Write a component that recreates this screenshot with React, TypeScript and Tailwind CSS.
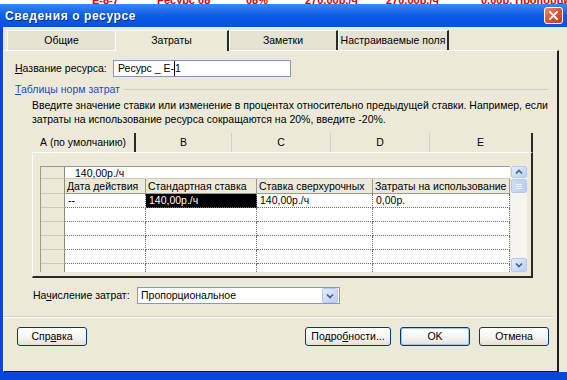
import clsx from 'clsx';

type Dir = 'up' | 'down';

const Chevron = ({ dir = 'down', color = '#4D6185' }: { dir?: Dir; color?: string }) => (
  <svg width="8" height="6" viewBox="0 0 8 6">
    <polyline
      points={dir === 'down' ? '1,1.5 4,4.5 7,1.5' : '1,4.5 4,1.5 7,4.5'}
      fill="none"
      stroke={color}
      strokeWidth="1.7"
    />
  </svg>
);

function ScrollButton({ dir, className }: { dir: Dir; className: string }) {
  return (
    <div
      className={clsx(
        'w-[16px] rounded-[2px] border border-[#B5C8F3] bg-linear-to-br from-[#E3ECFE] to-[#BACEF8] flex items-center justify-center',
        className
      )}
    >
      <Chevron dir={dir} />
    </div>
  );
}

function XpButton({
  children,
  className,
  isDefault,
}: {
  children: React.ReactNode;
  className: string;
  isDefault?: boolean;
}) {
  return (
    <div
      className={clsx(
        'h-[19px] rounded-[3px] border border-[#003C74] bg-linear-to-b from-white via-[#F7F6F2] to-[#E3E1D8] flex items-center justify-center',
        isDefault && 'shadow-[inset_0_0_0_1px_#A9C2EE]',
        className
      )}
    >
      {children}
    </div>
  );
}

const outerTabs = [
  { label: 'Общие', w: 'w-[108px]' },
  { label: 'Затраты', w: 'w-[114px]', active: true },
  { label: 'Заметки', w: 'w-[109px]' },
  { label: 'Настраиваемые поля', w: 'w-[111px]' },
];

const innerTabs = [
  { label: 'А (по умолчанию)', w: 'w-[104px]', active: true },
  { label: 'B', w: 'w-[96px]' },
  { label: 'C', w: 'w-[99px]' },
  { label: 'D', w: 'w-[99px]' },
  { label: 'E', w: 'w-[103px]' },
];

const colW = ['w-[81px]', 'w-[111px]', 'w-[116px]', 'w-[137px]'];
const headers = ['Дата действия', 'Стандартная ставка', 'Ставка сверхурочных', 'Затраты на использование'];
const dataRow = ['--', '140,00р./ч', '140,00р./ч', '0,00р.'];

// полоска таблицы, видимая над окном
const behind = [
  { text: '', w: 'w-[92px]' },
  { text: 'Е-8-7', w: 'w-[65px]' },
  { text: 'Ресурс 08', w: 'w-[89px]' },
  { text: '08%', w: 'w-[59px]' },
  { text: '270,00р./ч', w: 'w-[81px]' },
  { text: '270,00р./ч', w: 'w-[95px]' },
  { text: '0,00р. Пропорциональное', w: 'w-[120px]' },
];

function RowHead() {
  return <div className="w-[24px] shrink-0 bg-[#ECE9D8] border-r border-[#8E8C80] border-b border-b-[#CFCBBB]" />;
}

function Grid() {
  return (
    <div className="flex">
      <div className="w-[470px] h-[106px] overflow-hidden bg-white border-l border-t border-[#9C9A90]">
        <div className="flex h-[12px]">
          <RowHead />
          <div className="flex-1 pl-[10px] leading-[12px] border-b border-[#CFCBBB]">140,00р./ч</div>
        </div>
        <div className="flex h-[15px]">
          <RowHead />
          {headers.map((h, i) => (
            <div
              key={h}
              className={clsx(
                colW[i],
                'shrink-0 bg-[#ECE9D8] pl-[2px] leading-[14px] border-r border-[#9C9A90] border-b border-b-[#9C9A90] whitespace-nowrap overflow-hidden'
              )}
            >
              {h}
            </div>
          ))}
        </div>
        <div className="flex h-[14px]">
          <RowHead />
          {dataRow.map((d, i) => (
            <div
              key={i}
              className={clsx(
                colW[i],
                'shrink-0 pl-[3px] leading-[13px] border-r border-b border-dotted border-[#6E6E6E] whitespace-nowrap',
                i === 1 && 'bg-black text-white'
              )}
            >
              {d}
            </div>
          ))}
        </div>
        {[0, 1, 2, 3, 4].map((r) => (
          <div key={r} className="flex h-[14px]">
            <RowHead />
            {colW.map((w, i) => (
              <div key={i} className={clsx(w, 'shrink-0 border-r border-b border-dotted border-[#6E6E6E]')} />
            ))}
          </div>
        ))}
      </div>
      <div className="w-[16px] h-[106px] ml-[1px] flex flex-col bg-[#F5F4EF]">
        <ScrollButton dir="up" className="h-[12px]" />
        <div className="h-[14px] mt-[1px] rounded-[2px] border border-[#B5C8F3] bg-linear-to-r from-[#CCDAFC] to-[#BCCDF6] flex flex-col items-center justify-center gap-[1px]">
          <div className="w-[6px] h-px bg-[#EEF4FE]" />
          <div className="w-[6px] h-px bg-[#EEF4FE]" />
          <div className="w-[6px] h-px bg-[#EEF4FE]" />
        </div>
        <div className="flex-1" />
        <ScrollButton dir="down" className="h-[14px]" />
      </div>
    </div>
  );
}

export default function App() {
  return (
    <div className="w-[567px] h-[380px] overflow-hidden bg-white flex flex-col font-['Liberation_Sans',Arial,sans-serif] text-[10.5px] text-black">
      <div className="h-[4px] overflow-hidden flex shrink-0">
        {behind.map((b, i) => (
          <div key={i} className={clsx(b.w, 'shrink-0 -mt-[8px] text-[11px] font-bold text-[#E00000] whitespace-nowrap overflow-hidden')}>
            {b.text}
          </div>
        ))}
      </div>

      <div className="flex-1 flex flex-col bg-[#0848D6] pl-[3px] pb-[8px]">
        {/* заголовок окна */}
        <div className="h-[23px] -ml-[3px] shrink-0 flex items-center justify-between pl-[5px] pr-[4px] bg-linear-to-b from-[#3A88F2] via-[#0B5CE6] to-[#0852DC]">
          <span className="font-bold text-[12px] text-white tracking-[0.6px] [text-shadow:1px_1px_0_#0A2C8C]">
            Сведения о ресурсе
          </span>
          <div className="w-[19px] h-[17px] rounded-[3px] border border-white bg-linear-to-br from-[#EE8A6A] via-[#DD5430] to-[#C23E1C] flex items-center justify-center">
            <svg width="9" height="9" viewBox="0 0 9 9">
              <path d="M1 1 L8 8 M8 1 L1 8" stroke="white" strokeWidth="1.8" strokeLinecap="round" />
            </svg>
          </div>
        </div>

        <div className="flex-1 flex flex-col bg-[#ECE9D8] pt-[3px]">
          {/* вкладки */}
          <div className="flex h-[20px] pl-[4px] items-end">
            {outerTabs.map((t) => (
              <div
                key={t.label}
                className={clsx(
                  t.w,
                  'shrink-0 flex items-center justify-center border-t border-l border-white whitespace-nowrap',
                  t.active ? 'h-[21px] -mb-px bg-[#ECE9D8] border-r-2 border-r-[#2A2A2A] relative' : 'h-[20px] bg-[#E6E3D3]',
                  !t.active && t.label !== 'Общие' && 'border-r-2 border-r-[#2A2A2A]'
                )}
              >
                {t.label}
              </div>
            ))}
          </div>

          {/* панель */}
          <div className="flex-1 flex flex-col mr-[8px] border-t border-l border-white border-r-2 border-r-[#1E1E1E] border-b border-b-[#1E1E1E]">
            <div className="flex items-center mt-[9px] ml-[11px] h-[17px]">
              <span className="w-[98px]">
                <span className="underline">Н</span>азвание ресурса:
              </span>
              <div className="w-[178px] h-[17px] border border-[#7F9DB9] bg-white pl-[4px] flex items-center">
                Ресурс _ Е-<span className="border-l border-black">1</span>
              </div>
            </div>

            <div className="flex items-center mt-[6px] ml-[11px] mr-[9px] h-[13px]">
              <span className="text-[#1C4BD1] whitespace-nowrap">
                <span className="underline">Т</span>аблицы норм затрат
              </span>
              <div className="flex-1 ml-[4px] h-px bg-[#D2CFC0]" />
            </div>

            <p className="mt-[2px] ml-[28px] leading-[14px] whitespace-nowrap">
              Введите значение ставки или изменение в процентах относительно предыдущей ставки. Например, если
              <br />
              затраты на использование ресурса сокращаются на 20%, введите -20%.
            </p>

            <div className="flex mt-[7px] ml-[28px] w-[501px] h-[19px]">
              {innerTabs.map((t, i) => (
                <div
                  key={t.label}
                  className={clsx(
                    t.w,
                    'shrink-0 flex items-center justify-center',
                    t.active || i === innerTabs.length - 1
                      ? 'border-r-2 border-[#2A2A2A]'
                      : 'border-r border-[#D3D0C2]'
                  )}
                >
                  {t.label}
                </div>
              ))}
            </div>

            <div className="ml-[28px] w-[501px] h-[126px] pl-[7px] pt-[13px] border-t border-l border-white border-r-2 border-b-2 border-r-[#2A2A2A] border-b-[#2A2A2A]">
              <Grid />
            </div>

            <div className="flex items-center mt-[9px] ml-[29px] h-[17px]">
              <span className="w-[104px]">
                На<span className="underline">ч</span>исление затрат:
              </span>
              <div className="w-[203px] h-[17px] border border-[#7F9DB9] bg-white flex items-center">
                <span className="flex-1 pl-[3px]">Пропорциональное</span>
                <div className="w-[16px] h-[15px] mr-px rounded-[2px] border border-[#B5C8F3] bg-linear-to-br from-[#E3ECFE] to-[#BACEF8] flex items-center justify-center">
                  <Chevron />
                </div>
              </div>
            </div>

            <div className="mt-[12px] ml-[1px] mr-[4px] h-[2px] border-t border-[#D2CFC0] border-b border-b-white" />

            <div className="flex mt-[9px] ml-[13px] mr-[8px]">
              <XpButton className="w-[70px]">
                Спр<span className="underline">а</span>вка
              </XpButton>
              <div className="flex-1" />
              <div className="flex gap-[9px]">
                <XpButton className="w-[86px]">
                  Подро<span className="underline">б</span>ности...
                </XpButton>
                <XpButton className="w-[70px]" isDefault>
                  OK
                </XpButton>
                <XpButton className="w-[70px]">Отмена</XpButton>
              </div>
            </div>
          </div>
        </div>
      </div>
    </div>
  );
}
